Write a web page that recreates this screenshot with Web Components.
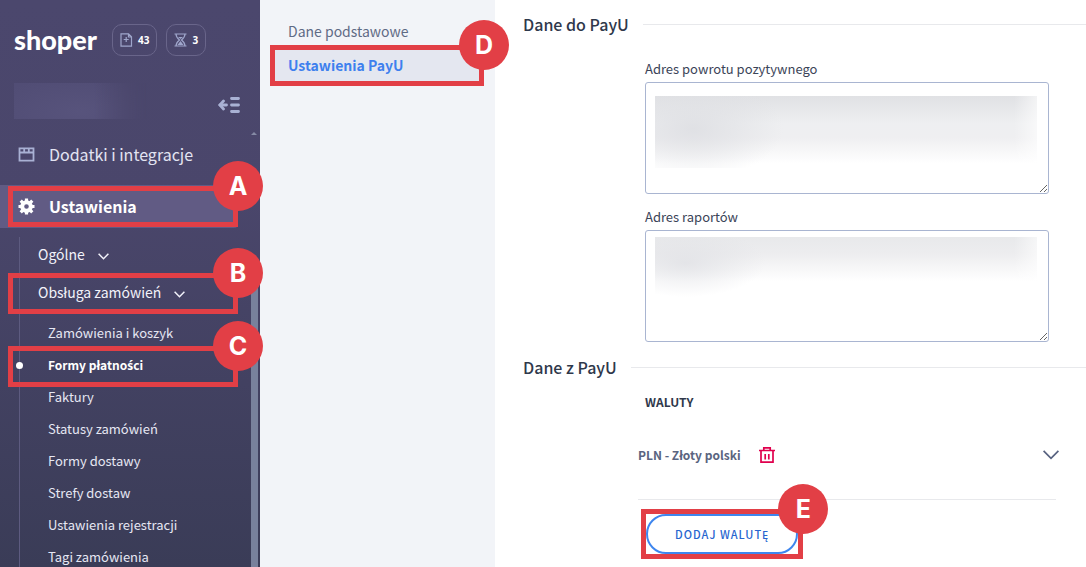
<!DOCTYPE html>
<html lang="pl">
<head>
<meta charset="utf-8">
<title>Shoper – Ustawienia PayU</title>
<style>
  body { margin: 0; background: #fff; font-family: "Noto Sans CJK SC", "Noto Sans", sans-serif; font-size: 14px; line-height: 20px; color: #333c4f; }
  /* the accented s comes out misplaced in the main face */
  .latin { font-family: "Noto Sans", sans-serif; }
</style>
</head>
<body>
<admin-shell>
  <side-bar slot="nav">
    <nav-item icon="box">Dodatki i integracje</nav-item>
    <call-out letter="A" style="--inset: 1px 22px 1px 8px"><nav-item icon="gear" active>Ustawienia</nav-item></call-out>
    <nav-tree>
      <nav-group>Ogólne</nav-group>
      <call-out letter="B" style="--inset: -1px 22px -2px 8px"><nav-group>Obsługa zamówień</nav-group></call-out>
      <nav-leaf>Zamówienia i koszyk</nav-leaf>
      <call-out letter="C" style="--inset: -3px 22px -6px 8px"><nav-leaf active>Formy płatno<span class="latin">ś</span>ci</nav-leaf></call-out>
      <nav-leaf>Faktury</nav-leaf>
      <nav-leaf>Statusy zamówień</nav-leaf>
      <nav-leaf>Formy dostawy</nav-leaf>
      <nav-leaf>Strefy dostaw</nav-leaf>
      <nav-leaf>Ustawienia rejestracji</nav-leaf>
      <nav-leaf>Tagi zamówienia</nav-leaf>
    </nav-tree>
  </side-bar>
  <sub-nav slot="subnav">
    <sub-link>Dane podstawowe</sub-link>
    <call-out letter="D"><sub-link active>Ustawienia PayU</sub-link></call-out>
  </sub-nav>
  <form-section heading="Dane do PayU">
    <text-field label="Adres powrotu pozytywnego"></text-field>
    <text-field label="Adres raportów" variant="short"></text-field>
  </form-section>
  <form-section heading="Dane z PayU">
    <currency-list heading="Waluty">
      <currency-row>PLN - Złoty polski</currency-row>
      <call-out slot="action" letter="E"><pill-button>Dodaj walutę</pill-button></call-out>
    </currency-list>
  </form-section>
</admin-shell>

<script>
const define = (name, html, setup) => {
  const template = document.createElement('template');
  template.innerHTML = html;
  customElements.define(name, class extends HTMLElement {
    constructor() {
      super();
      this.attachShadow({ mode: 'open' }).append(template.content.cloneNode(true));
    }
    connectedCallback() { if (setup) setup(this, this.shadowRoot); }
  });
};

define('admin-shell', `
<style>
  :host { display: flex; height: 100vh; overflow: hidden; }
  ::slotted([slot=nav]) { flex: 0 0 260px; }
  ::slotted([slot=subnav]) { flex: 0 0 235px; }
  main { flex: 1; min-width: 0; padding: 11px 0 0 28px; overflow: hidden; }
</style>
<slot name="nav"></slot><slot name="subnav"></slot>
<main><slot></slot></main>`);

define('call-out', `
<style>
  :host { display: block; position: relative; z-index: 2; }
  .frame { position: absolute; inset: var(--inset, 0); border: 5px solid #e23f46; pointer-events: none; }
  .badge { position: absolute; top: -30px; right: -30px; width: 50px; height: 50px; border-radius: 50%;
    background: #e23f46; color: #fff; display: grid; place-items: center;
    font: 700 25px/50px Inter, sans-serif; }
</style>
<slot></slot>
<div class="frame"><span class="badge"></span></div>`,
(el, root) => { root.querySelector('.badge').textContent = el.getAttribute('letter'); });

define('side-bar', `
<style>
  :host { display: block; position: relative; z-index: 2; box-sizing: border-box; background: linear-gradient(#4b476d, #4a466b 35%, #3a3c57); color: #fff; }
  header { display: flex; align-items: center; height: 32px; padding: 24px 0 0 14px; gap: 9px; }
  .logo { font: 900 27px/32px Lato, sans-serif; color: #fff; text-decoration: none; flex: 0 0 89px; }
  .pill { box-sizing: border-box; display: flex; align-items: center; gap: 5px; height: 32px; padding: 0 7px; border: 1px solid #69658a;
    border-radius: 10px; background: none; color: #fff; font: 700 10px/16px "Open Sans", sans-serif; }
  .shop { display: flex; justify-content: space-between; align-items: center; padding: 27px 20px 0 14px; }
  .name { width: 134px; height: 36px; background: radial-gradient(ellipse 90px 36px at 50% 80%, rgba(90,86,127,.7), transparent), linear-gradient(90deg, #514d75 60%, #4b476d); -webkit-mask: linear-gradient(90deg, #000 60%, transparent); }
  .fold { border: 0; background: none; padding: 8px 0 0; display: block; }
  svg { display: block; }
  nav { padding-top: 14px; }
  .up { position: absolute; right: 3px; top: 132px; border: 3px solid transparent; border-top: 0; border-bottom-color: #858aa5; }
  .thumb { position: absolute; right: 2px; top: 266px; bottom: 0; width: 7px; background: #78819c; border-radius: 4px 4px 0 0; }
</style>
<header>
  <a class="logo" href="#">shoper</a>
  <button class="pill" aria-label="Nowe zamówienia"><svg width="13" height="14" viewBox="0 0 13 14" fill="none" stroke="#9fa6cb" stroke-width="1.200"><path d="M1 .8h7.500l3 3v9.400H1z M8.500 1v3h3M6.200 4v5M3.700 6.500h5"/></svg>43</button>
  <button class="pill" aria-label="Oczekujące"><svg width="13" height="14" viewBox="0 0 13 14" fill="none" stroke="#9fa6cb" stroke-width="1.200"><path d="M.5 1h12M.5 13h12M2 1c0 3 1 4 3.500 6C3 9 2 10 2 13M11 1c0 3-1 4-3.500 6C10 9 11 10 11 13"/><path d="M4 4h5L6.500 6zM6.500 8L3.500 12h6z" fill="#9fa6cb" stroke="none"/></svg>3</button>
</header>
<div class="shop"><div class="name"></div>
  <button class="fold" aria-label="Zwiń menu"><svg width="22" height="16" viewBox="0 0 22 16" fill="none" stroke="#a9b1d4" stroke-width="2.800" stroke-linecap="round"><path d="M13.500 1.500h7M13.500 8h7M13.500 14.500h7M2 8h6.500"/><path d="M5.500 4L1.800 8L5.500 12"/></svg></button>
</div>
<nav><slot></slot></nav>
<i class="up"></i><i class="thumb"></i>`);

define('nav-item', `
<style>
  :host { display: block; padding-bottom: 9px; }
  :host([active]) { padding-bottom: 0; }
  a { display: flex; align-items: center; gap: 14px; height: 43px; width: 220px; padding-left: 18px; color: #e3e4f2; text-decoration: none; font-size: 16px; border-radius: 0 4px 4px 0; }
  :host([active]) a { background: #615b84; color: #fff; font-weight: 700; }
  svg { flex: 0 0 17px; display: block; }
  span { padding-bottom: 2px; }
  .gear, :host([active]) .box { display: none; }
  :host([active]) .gear { display: block; }
</style>
<a href="#">
  <svg class="box" width="17" height="17" viewBox="0 0 17 17" fill="none" stroke="#a9b1d4" stroke-width="1.800"><path d="M1.500 2.300h14v12.400h-14zM2 6.500h13M6.200 3v3.500M10.800 3v3.500"/></svg>
  <svg class="gear" width="17" height="17" viewBox="-8.500 -8.500 17 17"><circle r="4.300" fill="none" stroke="#fff" stroke-width="4"/><g stroke="#fff" stroke-width="3.200"><path d="M0-5V-8M0 5V8M-5 0H-8M5 0H8M-3.600-3.600L-5.800-5.800M3.600 3.600L5.800 5.800M-3.600 3.600L-5.800 5.800M3.600-3.600L5.800-5.800"/></g></svg>
  <span><slot></slot></span></a>`);

define('nav-tree', `
<style>
  :host { display: block; padding-top: 8px; position: relative; }
  :host::before { content: ""; position: absolute; left: 19px; top: 9px; bottom: 0; width: 1px; background: #5d5b80; }
</style><slot></slot>`);

define('nav-group', `
<style>
  :host { display: block; width: 238px; }
  :host-context(call-out) { margin-bottom: 5px; }
  button { display: flex; align-items: center; gap: 13px; width: 100%; height: 38px; padding: 0 0 2px 38px; border: 0; background: none; color: #f2f2fa; font: inherit; }
  svg { margin-top: 5px; }
</style>
<button><slot></slot><svg width="11" height="7" viewBox="0 0 11 7" fill="none" stroke="currentColor" stroke-width="1.500"><path d="M.6.8l4.900 4.900L10.400.8"/></svg></button>`);

define('nav-leaf', `
<style>
  :host { display: block; position: relative; width: 238px; }
  a { display: block; height: 32px; padding-left: 48px; font-size: 13px; line-height: 32px; color: #e6e7f3; text-decoration: none; }
  :host([active]) a { color: #fff; font-size: 12px; font-weight: 700; }
  :host([active])::before { content: ""; position: absolute; left: 16px; top: 13px; width: 7px; height: 7px; border-radius: 50%; background: #fff; }
</style>
<a href="#"><slot></slot></a>`);

define('sub-nav', `
<style>
  :host { display: block; box-sizing: border-box; padding: 19px 11px 0 10px; background: #f2f4f8; position: relative; z-index: 1; }
  nav { display: grid; }
</style><nav><slot></slot></nav>`);

define('sub-link', `
<style>
  :host { display: block; }
  a { display: block; height: 26px; padding: 0 18px; line-height: 25px; color: #5f6b85; text-decoration: none; }
  :host([active]) a { height: 41px; line-height: 41px; background: #e4e7f0; color: #3e80ee; font-weight: 700; }
</style><a href="#"><slot></slot></a>`);

define('form-section', `
<style>
  :host { display: block; }
  h2 { display: flex; align-items: center; gap: 14px; margin: 0; font-size: 16px; line-height: 26px; font-weight: 500; color: #2f384b; }
  h2::after { content: ""; flex: 1; height: 1px; background: #e8e9ec; }
</style><h2><span></span></h2><slot></slot>`,
(el, root) => { root.querySelector('span').textContent = el.getAttribute('heading'); });

define('text-field', `
<style>
  :host { display: block; margin: 0 37px 0 122px; padding-top: 22px; }
  :host([variant=short]) { padding: 13px 0 12px; }
  label { display: block; font-size: 13px; line-height: 20px; padding-bottom: 3px; color: #3b4458; }
  textarea { display: block; box-sizing: border-box; width: 100%; height: 112px; border: 1px solid #a9b5d1; border-radius: 3px; padding: 13px 11px 25px 9px; resize: vertical; font: inherit; outline: 0;
    background: linear-gradient(90deg, transparent 94%, rgba(255,255,255,.6)), radial-gradient(ellipse 90px 50px at 10% 45%, rgba(222,223,227,.9), transparent), linear-gradient(#e0e1e4, #eeeff1 38%, #efeff1 58%, #fff 94%) #fff;
    background-origin: content-box; background-clip: content-box; }
  :host([variant=short]) textarea { padding: 6px 11px 36px 9px;
    background: linear-gradient(90deg, transparent 94%, rgba(255,255,255,.6)), radial-gradient(ellipse 80px 34px at 8% 38%, rgba(224,225,229,.8), transparent), linear-gradient(#e8e9eb, #ededef 25%, #fff 65%) #fff;
    background-origin: content-box; background-clip: content-box; }
</style>
<label for="text"></label><textarea id="text"></textarea>`,
(el, root) => { root.querySelector('label').textContent = el.getAttribute('label'); });

define('currency-list', `
<style>
  :host { display: block; margin: 0 30px 0 115px; }
  h3 { margin: 0; padding: 12px 7px 11px; font-size: 12px; line-height: 20px; font-weight: 700; text-transform: uppercase; color: #2f384b; }
  .action { display: inline-block; padding: 9px 0 0 3px; }
</style>
<h3></h3><slot></slot><div class="action"><slot name="action"></slot></div>`,
(el, root) => { root.querySelector('h3').textContent = el.getAttribute('heading'); });

define('currency-row', `
<style>
  :host { display: flex; align-items: center; height: 64px; padding-bottom: 12px; border-bottom: 1px solid #e8e9ec; color: #5a6480; font-size: 12px; font-weight: 700; }
  button { border: 0; padding: 0; background: none; display: block; }
  svg { display: block; }
  .del { margin-left: 18px; }
  .open { margin: 0 -3px 0 auto; }
</style>
<slot></slot>
<button class="del" aria-label="Usuń"><svg width="16" height="16" viewBox="0 0 16 16" fill="none" stroke="#e0004d" stroke-width="1.700"><path d="M0 3.500h16M2 3.500v11.600h12V3.500M4.800 3.500V.9h6.400v2.600M6.200 7v5.500M9.800 7v5.500"/></svg></button>
<button class="open" aria-label="Rozwiń"><svg width="16" height="10" viewBox="0 0 16 10" fill="none" stroke="#56617f" stroke-width="1.700"><path d="M.6.900l7.400 7.400L15.400.9"/></svg></button>`);

define('pill-button', `
<style>
  :host { display: block; padding: 5px; }
  button { display: block; box-sizing: border-box; height: 40px; padding: 0 27px; border: 2px solid #3e86ee; border-radius: 20px; background: #fff;
    color: #2765cf; font: inherit; font-size: 11px; font-weight: 500; letter-spacing: 1px; text-transform: uppercase; }
</style><button><slot></slot></button>`);
</script>
</body>
</html>
